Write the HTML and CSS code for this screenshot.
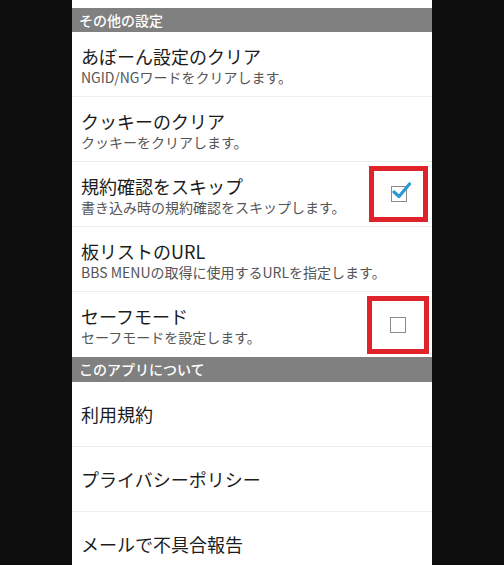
FILE: index.html
```
<!DOCTYPE html>
<html lang="ja">
<head>
    <meta charset="UTF-8">
    <meta name="viewport" content="width=device-width, initial-scale=1.0">
    <title>設定</title>
    <link rel="stylesheet" href="styles.css">
</head>
<body>
    <div class="screen">
        <!-- その他の設定 -->
        <div class="section-header">その他の設定</div>

        <div class="pref-item">
            <div class="pref-text">
                <div class="pref-title">あぼーん設定のクリア</div>
                <div class="pref-summary">NGID/NGワードをクリアします。</div>
            </div>
        </div>

        <div class="pref-item">
            <div class="pref-text">
                <div class="pref-title">クッキーのクリア</div>
                <div class="pref-summary">クッキーをクリアします。</div>
            </div>
        </div>

        <div class="pref-item">
            <div class="pref-text">
                <div class="pref-title">規約確認をスキップ</div>
                <div class="pref-summary">書き込み時の規約確認をスキップします。</div>
            </div>
            <div class="mark mark-first">
                <span class="checkbox checked">
                    <svg viewBox="0 0 20 20" width="20" height="20">
                        <path d="M3 11 L8 15.5 L18.5 3" fill="none" stroke="#2a9ad0" stroke-width="3.2" stroke-linecap="round" stroke-linejoin="round"/>
                    </svg>
                </span>
            </div>
        </div>

        <div class="pref-item">
            <div class="pref-text">
                <div class="pref-title">板リストのURL</div>
                <div class="pref-summary">BBS MENUの取得に使用するURLを指定します。</div>
            </div>
        </div>

        <div class="pref-item last">
            <div class="pref-text">
                <div class="pref-title">セーフモード</div>
                <div class="pref-summary">セーフモードを設定します。</div>
            </div>
            <div class="mark mark-second">
                <span class="checkbox"></span>
            </div>
        </div>

        <!-- このアプリについて -->
        <div class="section-header second">このアプリについて</div>

        <div class="pref-item single">
            <div class="pref-title">利用規約</div>
        </div>

        <div class="pref-item single">
            <div class="pref-title">プライバシーポリシー</div>
        </div>

        <div class="pref-item single">
            <div class="pref-title">メールで不具合報告</div>
        </div>
    </div>
</body>
</html>
```

FILE: styles.css
```
/* 基础样式 */
* {
    margin: 0;
    padding: 0;
    box-sizing: border-box;
}

html, body {
    background-color: #0e0e0e;
    height: 100%;
    overflow: hidden;
    font-family: 'Noto Sans CJK JP', 'Noto Sans', sans-serif;
}

.screen {
    width: 360px;
    margin: 0 auto;
    padding-top: 8px;
    background-color: #fff;
    min-height: 100%;
}

/* セクション見出し */
.section-header {
    height: 24px;
    padding-left: 7px;
    background-color: #808080;
    color: #fff;
    font-size: 14px;
    font-weight: 500;
    line-height: 24px;
}

.section-header.second {
    height: 25px;
    line-height: 25px;
}

/* 設定項目 */
.pref-item {
    display: flex;
    align-items: center;
    height: 65px;
    padding-left: 9px;
    border-bottom: 1px solid #ececec;
}

.pref-item.last {
    border-bottom: none;
}

.pref-text {
    flex: 1;
    padding-top: 2px;
}

.pref-title {
    font-size: 18px;
    color: #1c1c1c;
    line-height: 23px;
}

.pref-summary {
    font-size: 14px;
    color: #555;
    line-height: 18px;
}

.pref-item.single .pref-title {
    padding-top: 1px;
}

/* 赤枠（注釈） */
.mark {
    display: flex;
    justify-content: center;
    align-items: center;
    border: 5px solid #e0222b;
}

.mark-first {
    width: 59px;
    height: 56px;
    margin-right: 4px;
}

.mark-second {
    width: 62px;
    height: 58px;
    margin-right: 3px;
}

/* チェックボックス */
.checkbox {
    position: relative;
    display: block;
    width: 16px;
    height: 16px;
    border: 1.5px solid #8a8a8a;
}

.checkbox svg {
    position: absolute;
    left: -1px;
    top: -6px;
}
```
